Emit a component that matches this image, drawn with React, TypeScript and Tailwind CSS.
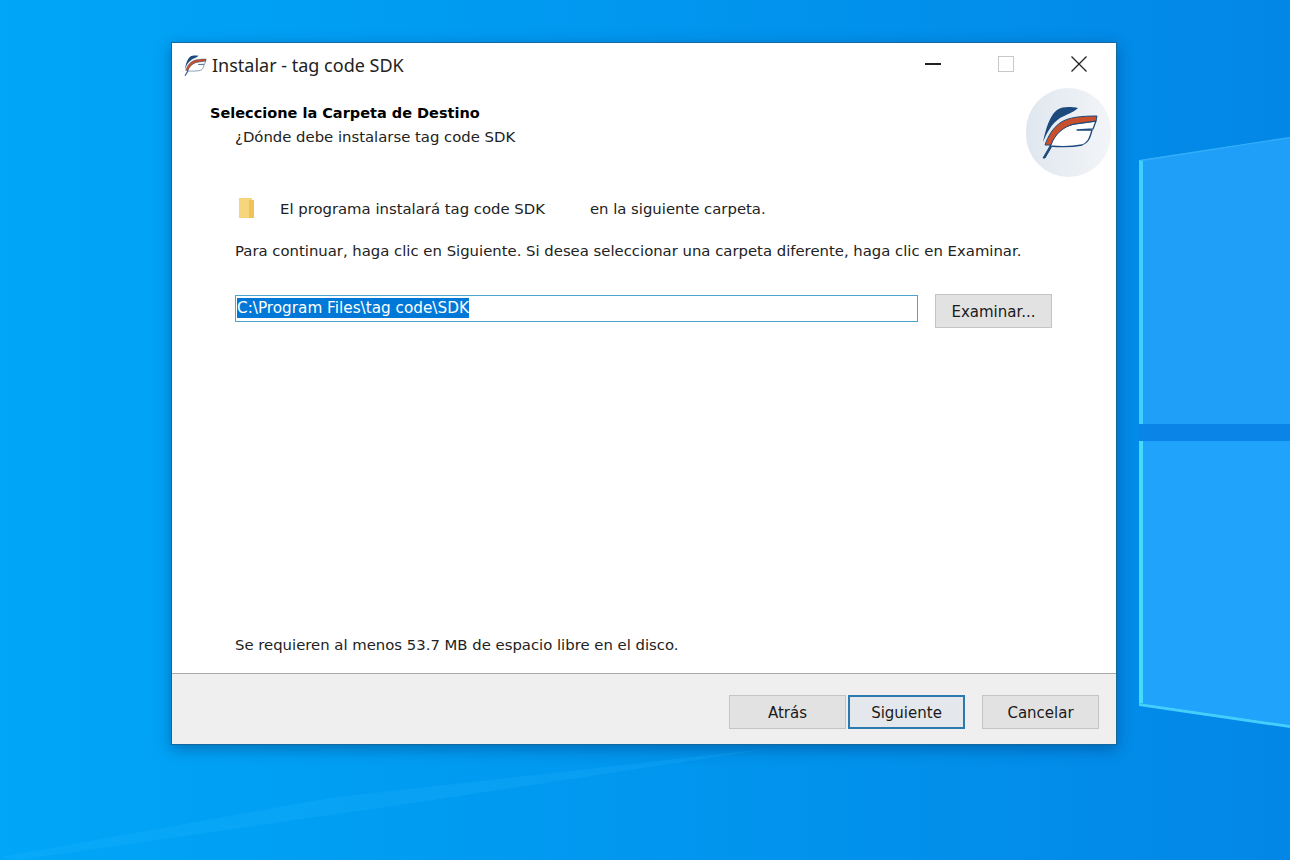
const body = "[font-family:'DejaVu_Sans',sans-serif]";

function Feather({ className }: { className: string }) {
  return (
    <svg viewBox="12 10 56 53" className={className}>
      <path d="M48 12C42 11 33 10 27 14 20 19 16 32 13 46 17 37 21 28 30 22 35 19 43 17 48 12Z" fill="#1c4a7c" />
      <path d="M20 50 13 62 15 62 22 50Z" fill="#1c4a7c" stroke="#1c4a7c" strokeWidth="1" />
      <path d="M20 50C24 37 33 30 44 28L66 25 63 33 47 34 62 34C60 42 58 47 52 49 42 51 30 51 20 50Z" fill="#fff" stroke="#1c4a7c" strokeWidth="1.3" strokeLinejoin="round" />
      <path d="M67 20C52 20 38 21 30 27 23 32 18 40 15 49L21 49C25 38 33 31 44 28L66 25Z" fill="#c8502c" stroke="#1c4a7c" strokeWidth="1" strokeLinejoin="round" />
    </svg>
  );
}

function WinButton({ label, focused }: { label: string; focused?: boolean }) {
  return (
    <button className={`h-[34px] w-[117px] pt-[2px] text-[15px] text-[#1a1a1a] ${focused ? "border-2 border-[#2a7ab0] bg-[#e4e8ec]" : "border border-[#c4c4c4] bg-[#e2e2e2]"}`}>
      {label}
    </button>
  );
}

export default function App() {
  return (
    <div className="relative h-[860px] w-[1290px] overflow-hidden bg-linear-to-r from-[#00a6f8] to-[#0387e6]">
      {/* wallpaper */}
      <svg viewBox="0 0 1290 860" className="absolute inset-0 h-full w-full">
        <polygon points="1139,160 1290,137 1290,424 1139,424" fill="#1f9ff8" />
        <polygon points="1139,441 1290,441 1290,725 1139,703" fill="#20a4fb" />
        <polygon points="1139,424 1290,424 1290,441 1139,441" fill="#0a84e6" />
        <rect x="1139" y="160" width="4" height="264" fill="#3fd0fb" />
        <rect x="1139" y="441" width="4" height="262" fill="#45dcfb" />
        <polygon points="1139,160 1290,137 1290,138 1143,161" fill="#34aefa" />
        <polygon points="1139,703 1290,725 1290,728 1139,706" fill="#45cefc" />
        <polygon points="0,857 330,798 782,747 420,802 20,860" fill="#2bbcfd" opacity="0.18" />
      </svg>

      <div className="relative ml-[171px] mt-[42px] flex h-[703px] w-[946px] flex-col border border-[#1468a0] bg-white shadow-[0_4px_14px_rgba(0,40,90,0.4)]">
        <div className="flex h-[45px] shrink-0 items-center pl-[12px] pr-[29px]">
          <Feather className="h-[21px] w-[23px]" />
          <span className="ml-[5px] text-[18px] text-[#222] [font-family:'Noto_Sans',sans-serif]">Instalar - tag code SDK</span>
          <div className="-mt-[3px] ml-auto flex items-center gap-[57px]">
            <div className="h-[2px] w-[16px] bg-[#222]" />
            <div className="h-[16px] w-[16px] border border-[#c8c8c8]" />
            <svg viewBox="0 0 16 16" className="h-[16px] w-[16px]">
              <path d="M0.5 0.5 15.5 15.5M15.5 0.5 0.5 15.5" stroke="#222" strokeWidth="1.3" />
            </svg>
          </div>
        </div>

        <div className={`relative flex flex-1 flex-col pl-[63px] pr-[64px] text-[14.85px] text-[#222] ${body}`}>
          <div className="absolute right-[5px] top-[0px] flex h-[89px] w-[85px] items-center justify-center rounded-full bg-linear-to-r from-[#dfe7ef] to-[#f3f5f8]">
            <Feather className="ml-[3px] h-[53px] w-[56px]" />
          </div>
          <div className="-ml-[25px] mt-[15px] text-[14.5px] font-bold text-black">Seleccione la Carpeta de Destino</div>
          <div className="mt-[1px]">¿Dónde debe instalarse tag code SDK</div>
          <div className="mt-[50px] flex items-center">
            <svg viewBox="0 0 16 22" className="ml-[4px] h-[22px] w-[16px]">
              <rect x="0" y="0" width="13" height="20" fill="#f7d57c" />
              <rect x="10" y="2" width="5" height="18" fill="#f0c258" />
            </svg>
            <span className="ml-[25px]">El programa instalará tag code SDK</span>
            <span className="ml-[45px]">en la siguiente carpeta.</span>
          </div>
          <div className="mt-[20px]">Para continuar, haga clic en Siguiente. Si desea seleccionar una carpeta diferente, haga clic en Examinar.</div>
          <div className="mt-[32px] flex items-start">
            <div className="flex h-[27px] w-[683px] items-center border border-[#4fa3d1] px-[1px]">
              <span className="bg-[#0078d7] text-[15.25px] leading-[20px] text-white">C:\Program Files\tag code\SDK</span>
            </div>
            <button className="-mt-[1px] ml-[17px] h-[34px] w-[117px] border border-[#c4c4c4] bg-[#e2e2e2] pt-[4px] text-[15px] text-[#1a1a1a]">Examinar...</button>
          </div>
          <div className="mb-[17px] mt-auto">Se requieren al menos 53.7 MB de espacio libre en el disco.</div>
        </div>

        <div className={`flex h-[71px] shrink-0 items-start justify-end border-t border-[#a8a8a8] bg-[#efefef] pr-[17px] pt-[21px] ${body}`}>
          <WinButton label="Atrás" />
          <div className="ml-[2px]"><WinButton label="Siguiente" focused /></div>
          <div className="ml-[17px]"><WinButton label="Cancelar" /></div>
        </div>
      </div>
    </div>
  );
}
